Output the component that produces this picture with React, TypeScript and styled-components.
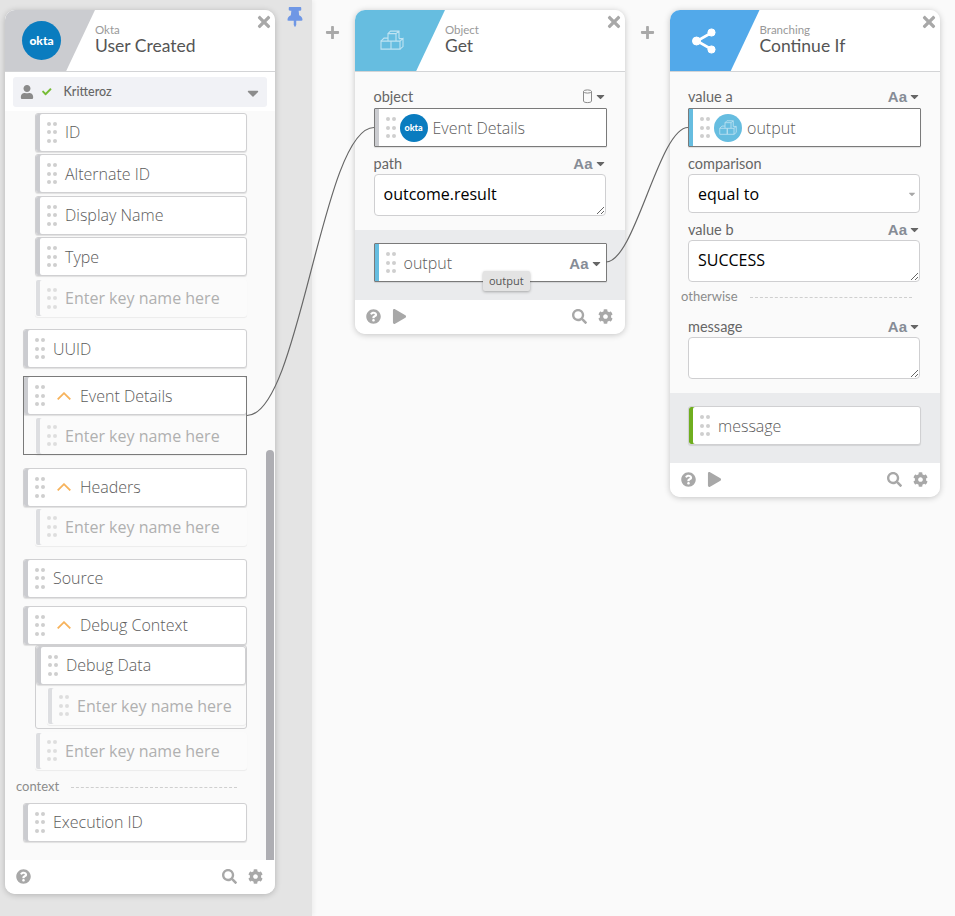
import React from 'react';
import styled, { createGlobalStyle } from 'styled-components';
import {
  FaCaretDown,
  FaCheck,
  FaCog,
  FaPlay,
  FaPlus,
  FaQuestionCircle,
  FaSearch,
  FaThumbtack,
  FaTimes,
  FaUser,
} from 'react-icons/fa';

const GlobalStyle = createGlobalStyle`
  html, body {
    margin: 0;
    padding: 0;
    height: 100%;
    overflow: hidden;
    background: #fafafa;
    font-family: "Open Sans", "Liberation Sans", sans-serif;
  }
`;

const Page = styled.div`
  position: relative;
  display: flex;
  width: 955px;
  height: 916px;
  overflow: hidden;
`;

const Rail = styled.aside`
  flex: 0 0 312px;
  display: flex;
  align-items: flex-start;
  gap: 10px;
  padding: 10px 0 0 5px;
  box-sizing: border-box;
  background: #e4e4e4;
  box-shadow: 2px 0 4px rgba(0, 0, 0, 0.05);
`;

const Canvas = styled.main`
  display: flex;
  align-items: flex-start;
  padding: 10px 0 0 14px;
`;

const Step = styled.div`
  display: flex;
  align-items: flex-start;
  margin-right: 15.5px;
`;

const AddButton = styled.div`
  flex: none;
  width: 13px;
  margin: 15px 16px 0 0;
  color: #a9a9a9;
  font-size: 15px;
  line-height: 15px;

  svg {
    margin-left: -1px;
  }
`;

const PinButton = styled.div`
  color: #6f97e5;
  font-size: 20px;
  line-height: 20px;
  margin-top: -3px;
`;

const Card = styled.section<{ $height: number }>`
  position: relative;
  display: flex;
  flex-direction: column;
  flex: none;
  width: 270px;
  height: ${(p) => p.$height}px;
  border-radius: 10px;
  background: #fafafa;
  box-shadow: 0 1px 6px rgba(0, 0, 0, 0.22);
  overflow: hidden;
`;

const CardHeader = styled.header`
  flex: none;
  display: flex;
  height: 61px;
  background: #fff;
  border-bottom: 1px solid #d3d4d6;
`;

const Wedge = styled.div<{ $color: string }>`
  flex: none;
  display: flex;
  align-items: center;
  width: 90px;
  height: 61px;
  padding-left: 17px;
  box-sizing: border-box;
  background: ${(p) => p.$color};
  clip-path: polygon(0 0, 100% 0, 68% 100%, 0 100%);
`;

const WedgeSlot = styled.div<{ $shift?: number }>`
  display: flex;
  align-items: center;
  justify-content: center;
  width: 39px;
  margin-left: ${(p) => p.$shift ?? 0}px;
`;

const Heading = styled.div`
  padding-top: 14px;
  font-family: Lato, "Open Sans", sans-serif;
`;

const Category = styled.div`
  font-size: 11.5px;
  line-height: 12px;
  color: #999;
`;

const Title = styled.div`
  font-size: 17.5px;
  line-height: 20px;
  color: #555;
`;

const CloseButton = styled.div`
  position: absolute;
  top: 3px;
  right: 2px;
  color: #a8a8a8;
  font-size: 18px;
  line-height: 18px;
`;

const Logo = styled.div<{ $size: number }>`
  flex: none;
  display: flex;
  align-items: center;
  justify-content: center;
  width: ${(p) => p.$size}px;
  height: ${(p) => p.$size}px;
  border-radius: 50%;
  background: #0a7cbf;
  color: #fff;
  font-family: Lato, sans-serif;
  font-weight: 900;
  font-size: ${(p) => Math.round(p.$size * 0.32)}px;
`;

const ConnectionBand = styled.div`
  flex: none;
  padding: 5px 8px 4px;
  background: #fff;
`;

const Connection = styled.div`
  display: flex;
  align-items: center;
  box-sizing: border-box;
  height: 30px;
  padding: 0 7px 1px;
  border-radius: 3px;
  background: #f1f2f6;
  color: #666;
  font-family: Lato, sans-serif;
  font-size: 12.5px;
  font-weight: 500;
`;

const UserMark = styled.span`
  display: flex;
  color: #8a8a8a;
  font-size: 14px;
`;

const OkMark = styled.span`
  display: flex;
  margin: 0 12px 0 8px;
  color: #76bc36;
  font-size: 9.5px;
`;

const ConnectionCaret = styled.span`
  display: flex;
  margin: 2px -2px 0 auto;
  color: #8c8c8c;
  font-size: 18px;
`;

const List = styled.div`
  flex: 1;
  display: flex;
  flex-direction: column;
  padding: 0 28px 0 18px;
`;

const Pill = styled.div<{
  $indent?: number;
  $accent?: string;
  $ghost?: boolean;
  $active?: boolean;
  $top?: number;
}>`
  flex: none;
  display: flex;
  align-items: center;
  box-sizing: border-box;
  height: ${(p) => (p.$ghost ? 38 : 39)}px;
  margin-top: ${(p) => p.$top ?? 0}px;
  margin-left: ${(p) => p.$indent ?? 0}px;
  padding-left: 4px;
  border: 1px solid ${(p) => (p.$active ? '#7a7a7a' : p.$ghost ? 'transparent' : '#d0d0d2')};
  border-radius: ${(p) => (p.$active ? 1 : 3)}px;
  background: ${(p) => (p.$ghost ? '#fbfbfb' : '#fff')};
  box-shadow:
    inset 4px 0 0 ${(p) => p.$accent ?? (p.$ghost ? '#dddee1' : '#cbccd0')},
    0 1px 1px rgba(0, 0, 0, ${(p) => (p.$ghost ? 0.06 : 0.1)});
  font-size: 16px;
  font-weight: 300;
  color: ${(p) => (p.$ghost ? '#b0b0b0' : '#5c5c5c')};
  white-space: nowrap;
`;

const Grip = styled.div<{ $faint?: boolean }>`
  flex: none;
  display: grid;
  grid-template-columns: 4px 4px;
  grid-auto-rows: 4px;
  gap: 4.5px 2px;
  margin: 0 8px 0 7px;

  i {
    border-radius: 50%;
    background: ${(p) => (p.$faint ? '#dedede' : '#cfcfcf')};
  }
`;

const ChevronMark = styled.svg`
  flex: none;
  margin: 0 9px 0 4px;
`;

const GhostText = styled.span`
  font-weight: 400;
`;

const Nested = styled.div<{ $active?: boolean; $top?: number }>`
  flex: none;
  margin-top: ${(p) => p.$top ?? 0}px;
  ${(p) => (p.$active ? 'outline: 1px solid #7a7a7a; outline-offset: -1px;' : '')}
`;

const GhostGap = styled.div`
  height: 1.5px;
`;

const DebugBox = styled.div`
  flex: none;
  margin-left: 12px;
  box-sizing: border-box;
  height: 84px;
  border: 1px solid #cfcfd1;
  border-radius: 3px;
`;

const Section = styled.div<{ $top: number; $left?: number; $right?: number }>`
  display: flex;
  align-items: center;
  gap: 12px;
  margin: ${(p) => p.$top}px ${(p) => p.$right ?? 10}px 0 ${(p) => p.$left ?? -7}px;
  font-family: Lato, sans-serif;
  font-size: 13px;
  line-height: 16px;
  color: #8c8c8c;

  &::after {
    content: '';
    flex: 1;
    margin-top: 3px;
    border-top: 1px dashed #cfcfcf;
  }
`;

const Fields = styled.div`
  flex: 1;
  padding: 16px 18.5px 0;
`;

const FieldLabel = styled.div<{ $top?: number }>`
  display: flex;
  align-items: center;
  justify-content: space-between;
  height: 16px;
  margin-top: ${(p) => p.$top ?? 0}px;
  margin-bottom: 3px;
  font-family: Lato, sans-serif;
  font-size: 14.5px;
  color: #666;
`;

const TypePicker = styled.span`
  display: flex;
  align-items: center;
  gap: 1px;
  padding-top: 1px;
  color: #868c96;
  font-family: "Liberation Sans", sans-serif;
  font-size: 15px;
  font-weight: 700;

  svg:last-child {
    font-size: 13px;
    color: #666;
  }
`;

const TextBox = styled.textarea<{ $height: number }>`
  display: block;
  box-sizing: border-box;
  width: 232px;
  height: ${(p) => p.$height}px;
  padding: 7px 9px;
  border: 1px solid #cfcfd1;
  border-radius: 4px;
  background: #fff;
  color: #000;
  font-family: "Open Sans", sans-serif;
  font-size: 16px;
  line-height: 24px;
  resize: vertical;
  outline: none;
`;

const SelectBox = styled.div`
  display: flex;
  align-items: center;
  box-sizing: border-box;
  width: 232px;
  height: 39px;
  padding: 0 9px;
  border: 1px solid #cfcfd1;
  border-radius: 4px;
  background: #fff;
  color: #000;
  font-size: 16px;

  svg {
    margin-left: auto;
    margin-right: -7px;
    font-size: 10px;
    color: #a8a8a8;
  }
`;

const OutputBand = styled.div`
  flex: none;
  position: relative;
  height: 70px;
  box-sizing: border-box;
  padding: 13px 18.5px 0;
  background: #eaebed;
`;

const OutputType = styled(TypePicker)`
  margin-left: auto;
  margin-right: 3px;
`;

const Tooltip = styled.div`
  position: absolute;
  left: 128px;
  top: 41px;
  padding: 0 6px;
  height: 20px;
  border-radius: 2px;
  background: #e3e3e3;
  box-shadow: 0 1px 3px rgba(0, 0, 0, 0.3);
  color: #555;
  font-size: 11px;
  line-height: 20px;
`;

const InlineLogo = styled(Logo)`
  margin: 0 5px 0 -4px;
`;

const InlineIcon = styled.div`
  flex: none;
  display: flex;
  align-items: center;
  justify-content: center;
  width: 28px;
  height: 28px;
  margin: 0 5px 0 -4px;
  border-radius: 50%;
  background: #66bde0;
`;

const CardFooter = styled.footer`
  flex: none;
  display: flex;
  align-items: center;
  height: 34px;
  padding: 0 12px 2px 11px;
  box-sizing: border-box;
  background: #fff;
  color: #a8a8a8;
  font-size: 15px;
`;

const FooterIcon = styled.span<{ $push?: boolean; $gap?: number }>`
  display: flex;
  margin-left: ${(p) => (p.$push ? 'auto' : `${p.$gap ?? 0}px`)};
`;

const ScrollThumb = styled.div`
  position: absolute;
  right: 1px;
  top: 440px;
  bottom: 34px;
  width: 8px;
  border-radius: 4px 4px 0 0;
  background: #aeaeb3;
`;

const Wires = styled.svg`
  position: absolute;
  inset: 0;
  pointer-events: none;
`;

const DB = () => (
  <svg width="11" height="15" viewBox="0 0 11 15" fill="none" stroke="#8a8a8a" strokeWidth="1">
    <ellipse cx="5.5" cy="2.5" rx="4" ry="1.6" />
    <path d="M1.5 2.5v9.5c0 1 1.8 1.6 4 1.6s4-.6 4-1.6V2.5" />
  </svg>
);

const Cubes = ({ size }: { size: number }) => (
  <svg width={size} height={size * 0.84} viewBox="0 0 24 20" fill="none" stroke="#bfe3f2" strokeWidth="1.1">
    <path d="M1 11h10v8H1zM11 11h9v8h-9z" />
    <path d="M20 19l3-2.5V8.5L20 11M1 11l3-3h4M19 8.5h4" />
    <path d="M8 11V3.5h8V11M8 3.5L10.5 1H19v7.5M16 3.5L19 1" />
  </svg>
);

const ShareMark = () => (
  <svg width="24" height="26" viewBox="0 0 24 26" fill="#fff" stroke="#fff">
    <path d="M19 5L5 13l14 8" fill="none" strokeWidth="2.6" />
    <circle cx="19.5" cy="4.5" r="3.6" />
    <circle cx="4.5" cy="13" r="4" />
    <circle cx="19.5" cy="21.5" r="3.6" />
  </svg>
);

const Chevron = () => (
  <ChevronMark width="14" height="8" viewBox="0 0 14 8" fill="none" stroke="#f7b35c" strokeWidth="1.8">
    <path d="M.7 7.4L7 1.2l6.3 6.2" />
  </ChevronMark>
);

const GripDots = ({ faint }: { faint?: boolean }) => (
  <Grip $faint={faint}>
    {Array.from({ length: 6 }, (_, i) => (
      <i key={i} />
    ))}
  </Grip>
);

const Ghost = ({ indent }: { indent?: number }) => (
  <Pill $ghost $indent={indent}>
    <GripDots faint />
    <GhostText>Enter key name here</GhostText>
  </Pill>
);

const Footer = ({ play }: { play?: boolean }) => (
  <CardFooter>
    <FooterIcon>
      <FaQuestionCircle />
    </FooterIcon>
    {play && (
      <FooterIcon $gap={11}>
        <FaPlay />
      </FooterIcon>
    )}
    <FooterIcon $push>
      <FaSearch />
    </FooterIcon>
    <FooterIcon $gap={11}>
      <FaCog />
    </FooterIcon>
  </CardFooter>
);

const Aa = () => (
  <TypePicker>
    Aa
    <FaCaretDown />
  </TypePicker>
);

const flatKeys = ['ID', 'Alternate ID', 'Display Name', 'Type'];

export default function App() {
  return (
    <Page>
      <GlobalStyle />
      <Rail>
        <Card $height={884}>
          <CardHeader>
            <Wedge $color="#cbccd0">
              <Logo $size={39}>okta</Logo>
            </Wedge>
            <Heading>
              <Category>Okta</Category>
              <Title>User Created</Title>
            </Heading>
          </CardHeader>
          <CloseButton>
            <FaTimes />
          </CloseButton>
          <ConnectionBand>
            <Connection>
              <UserMark>
                <FaUser />
              </UserMark>
              <OkMark>
                <FaCheck />
              </OkMark>
              Kritteroz
              <ConnectionCaret>
                <FaCaretDown />
              </ConnectionCaret>
            </Connection>
          </ConnectionBand>
          <List>
            {flatKeys.map((key, i) => (
              <Pill key={key} $indent={12} $top={i ? 2.5 : 1.5}>
                <GripDots />
                {key}
              </Pill>
            ))}
            <Nested $top={3}>
              <Ghost indent={12} />
            </Nested>
            <Pill $top={12}>
              <GripDots />
              UUID
            </Pill>
            <Nested $active $top={8}>
              <Pill>
                <GripDots />
                <Chevron />
                Event Details
              </Pill>
              <GhostGap />
              <Ghost indent={12} />
            </Nested>
            <Pill $top={13}>
              <GripDots />
              <Chevron />
              Headers
            </Pill>
            <Nested $top={1}>
              <Ghost indent={12} />
            </Nested>
            <Pill $top={13}>
              <GripDots />
              Source
            </Pill>
            <Pill $top={8}>
              <GripDots />
              <Chevron />
              Debug Context
            </Pill>
            <DebugBox>
              <Pill>
                <GripDots />
                Debug Data
              </Pill>
              <Nested $top={2}>
                <Ghost indent={11} />
              </Nested>
            </DebugBox>
            <Nested $top={3}>
              <Ghost indent={12} />
            </Nested>
            <Section $top={8}>context</Section>
            <Pill $top={9}>
              <GripDots />
              Execution ID
            </Pill>
          </List>
          <Footer />
          <ScrollThumb />
        </Card>
        <PinButton>
          <FaThumbtack />
        </PinButton>
      </Rail>
      <Canvas>
        <Step>
          <AddButton>
            <FaPlus />
          </AddButton>
          <Card $height={324}>
            <CardHeader>
              <Wedge $color="#66bde0">
                <WedgeSlot>
                  <Cubes size={24} />
                </WedgeSlot>
              </Wedge>
              <Heading>
                <Category>Object</Category>
                <Title>Get</Title>
              </Heading>
            </CardHeader>
            <CloseButton>
              <FaTimes />
            </CloseButton>
            <Fields>
              <FieldLabel>
                object
                <TypePicker>
                  <DB />
                  <FaCaretDown />
                </TypePicker>
              </FieldLabel>
              <Pill $active $top={4}>
                <GripDots />
                <InlineLogo $size={28}>okta</InlineLogo>
                Event Details
              </Pill>
              <FieldLabel $top={8}>
                path
                <Aa />
              </FieldLabel>
              <TextBox $height={42} readOnly value="outcome.result" />
            </Fields>
            <OutputBand>
              <Pill $active $accent="#66bde0">
                <GripDots />
                output
                <OutputType>
                  Aa
                  <FaCaretDown />
                </OutputType>
              </Pill>
              <Tooltip>output</Tooltip>
            </OutputBand>
            <Footer play />
          </Card>
        </Step>
        <Step>
          <AddButton>
            <FaPlus />
          </AddButton>
          <Card $height={487}>
            <CardHeader>
              <Wedge $color="#52a9ea">
                <WedgeSlot $shift={-2}>
                  <ShareMark />
                </WedgeSlot>
              </Wedge>
              <Heading>
                <Category>Branching</Category>
                <Title>Continue If</Title>
              </Heading>
            </CardHeader>
            <CloseButton>
              <FaTimes />
            </CloseButton>
            <Fields>
              <FieldLabel>
                value a
                <Aa />
              </FieldLabel>
              <Pill $active $accent="#66bde0" $top={4}>
                <GripDots />
                <InlineIcon>
                  <Cubes size={18} />
                </InlineIcon>
                output
              </Pill>
              <FieldLabel $top={8}>comparison</FieldLabel>
              <SelectBox>
                equal to
                <FaCaretDown />
              </SelectBox>
              <FieldLabel $top={8}>
                value b
                <Aa />
              </FieldLabel>
              <TextBox $height={42} readOnly value="SUCCESS" />
              <Section $top={6} $right={9} $left={-7}>
                otherwise
              </Section>
              <FieldLabel $top={14}>
                message
                <Aa />
              </FieldLabel>
              <TextBox $height={42} readOnly value="" />
            </Fields>
            <OutputBand>
              <Pill $accent="#6fae1f">
                <GripDots />
                message
              </Pill>
            </OutputBand>
            <Footer play />
          </Card>
        </Step>
      </Canvas>
      <Wires width="955" height="916" fill="none" stroke="#666" strokeWidth="1.2">
        <path d="M247 415.5C300 415.5 322 127.5 374 127.5" />
        <path d="M606 262C635 262 659 127.5 688 127.5" />
      </Wires>
    </Page>
  );
}
